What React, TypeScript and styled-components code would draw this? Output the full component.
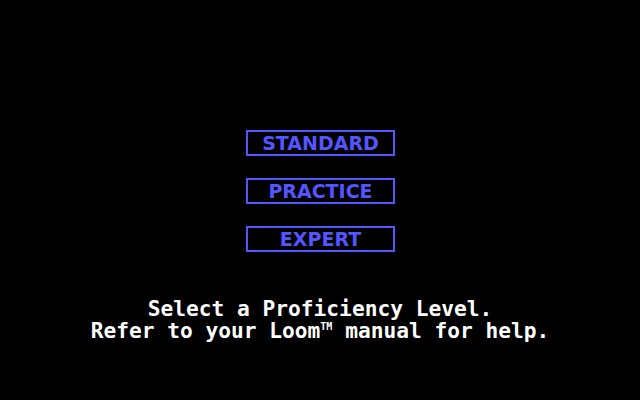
import React from "react";
import styled, { createGlobalStyle } from "styled-components";

const Global = createGlobalStyle`
  html, body { margin: 0; padding: 0; background: #000; }
  body { width: 640px; height: 400px; overflow: hidden; }
`;

const Screen = styled.div`
  width: 640px;
  height: 400px;
  background: #000;
  display: flex;
  flex-direction: column;
  align-items: center;
  padding-top: 130px;
  box-sizing: border-box;
`;

const Menu = styled.div`
  display: flex;
  flex-direction: column;
  gap: 22px;
  margin-left: 1px;
`;

const LevelButton = styled.button`
  width: 149px;
  height: 26px;
  box-sizing: border-box;
  border: 2px solid #5555ff;
  background: #000;
  color: #5555ff;
  font-family: "DejaVu Sans", "Verdana", sans-serif;
  font-weight: bold;
  font-size: 19px;
  letter-spacing: 0;
  line-height: 22px;
  padding: 0;
  display: flex;
  align-items: center;
  justify-content: center;
  cursor: pointer;
`;

const Caption = styled.div`
  margin-top: 46px;
  color: #fff;
  font-family: "DejaVu Sans Mono", "Liberation Mono", monospace;
  font-weight: bold;
  font-size: 21.2px;
  line-height: 22px;
  text-align: center;
  white-space: pre;
`;

const Tm = styled.sup`
  font-size: 10px;
  vertical-align: 8px;
  line-height: 0;
`;

export default function App() {
  return (
    <>
      <Global />
      <Screen>
        <Menu>
          <LevelButton>STANDARD</LevelButton>
          <LevelButton>PRACTICE</LevelButton>
          <LevelButton>EXPERT</LevelButton>
        </Menu>
        <Caption>
          Select a Proficiency Level.
          {"\n"}
          Refer to your Loom<Tm>TM</Tm> manual for help.
        </Caption>
      </Screen>
    </>
  );
}
